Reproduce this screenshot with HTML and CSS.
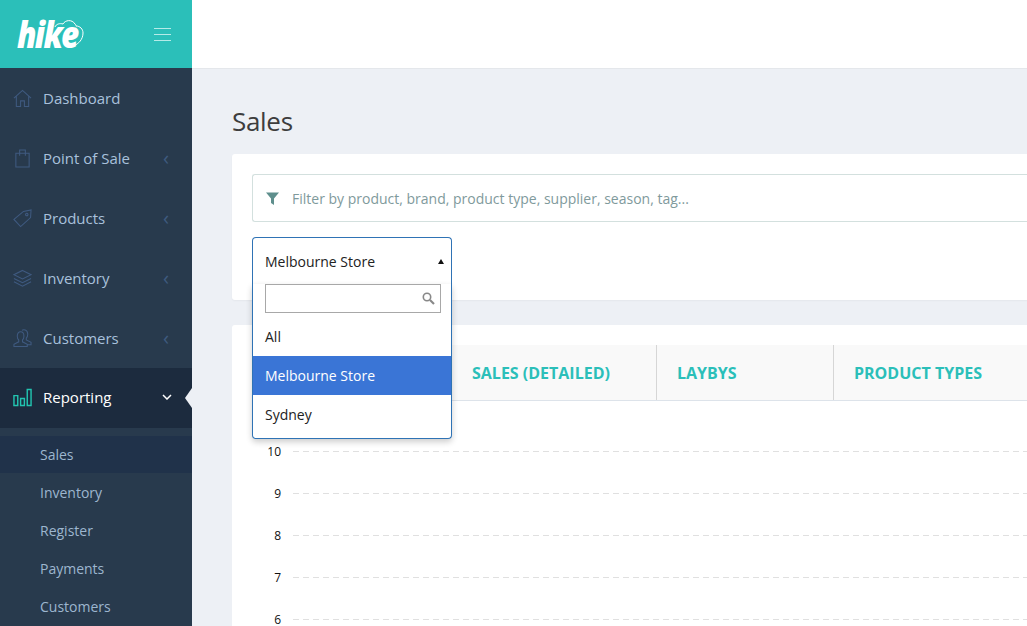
FILE: index.html
```html
<!DOCTYPE html>
<html lang="en">
<head>
    <meta charset="UTF-8">
    <meta name="viewport" content="width=device-width, initial-scale=1.0">
    <title>Sales - Hike</title>
    <link rel="stylesheet" href="styles.css">
</head>
<body>
    <div class="app">
        <aside class="sidebar">
            <div class="brand">
                <div class="logo">
                    <svg class="logo-cloud" width="34" height="32" viewBox="0 0 34 32" fill="none" stroke="#fff" stroke-width="1">
                        <path d="M3 9c1-3 5-4 8-3 2-4 9-5 12 0 1 1 1 2 1 2 4 0 7 3 7 7 0 6-4 11-10 13"/>
                    </svg>
                    <span class="logo-text">hike</span>
                </div>
                <div class="burger"><span></span><span></span><span></span></div>
            </div>
            <nav class="nav">
                <a class="nav-item">
                    <svg class="nav-icon" viewBox="0 0 20 20" fill="none" stroke="#3f5a80" stroke-width="1.1">
                        <path d="M1 9.500 10 1.500l9 8M3.500 8v10.500h4.500v-6h4v6h4.500V8"/>
                    </svg>
                    <span class="nav-label">Dashboard</span>
                </a>
                <a class="nav-item">
                    <svg class="nav-icon" viewBox="0 0 20 20" fill="none" stroke="#3f5a80" stroke-width="1.1">
                        <path d="M3 4.500h14v14.500H3zM7 7V1h6v6"/>
                    </svg>
                    <span class="nav-label">Point of Sale</span>
                    <span class="nav-arrow">&lsaquo;</span>
                </a>
                <a class="nav-item">
                    <svg class="nav-icon" viewBox="0 0 20 20" fill="none" stroke="#3f5a80" stroke-width="1.1">
                        <path d="M1 11 11 2.500l8-1.500-.5 8L8 18.500zM14.500 4.500a1.300 1.300 0 1 0 .01 0z"/>
                    </svg>
                    <span class="nav-label">Products</span>
                    <span class="nav-arrow">&lsaquo;</span>
                </a>
                <a class="nav-item">
                    <svg class="nav-icon" viewBox="0 0 20 20" fill="none" stroke="#3f5a80" stroke-width="1.1">
                        <path d="M10 1.500 19 6l-9 4.500L1 6zM1 10l9 4.500 9-4.500M1 13.500 10 18l9-4.500"/>
                    </svg>
                    <span class="nav-label">Inventory</span>
                    <span class="nav-arrow">&lsaquo;</span>
                </a>
                <a class="nav-item">
                    <svg class="nav-icon" viewBox="0 0 20 20" fill="none" stroke="#3f5a80" stroke-width="1.1">
                        <path d="M1 18.500v-2.500l5-2.500v-2c-1-1-1.500-2.500-1.500-4 0-3 1.500-4.500 3.500-4.500s3.500 1.500 3.500 4.500c0 1.500-.5 3-1.500 4v2l5 2.500v2.500zM9.500 1.500c1-1 6-1.500 6 4 0 1.500-.5 3-1.500 4v2l5 2.500v2.500h-3.500"/>
                    </svg>
                    <span class="nav-label">Customers</span>
                    <span class="nav-arrow">&lsaquo;</span>
                </a>
                <a class="nav-item active">
                    <svg class="nav-icon" viewBox="0 0 20 20" fill="none" stroke="#22c4b0" stroke-width="1.500">
                        <path d="M1 8h4v10.500H1zM8 11h4v7.500H8zM15 1.500h4v17h-4z"/>
                    </svg>
                    <span class="nav-label">Reporting</span>
                    <svg class="nav-chevron" width="10" height="6" viewBox="0 0 10 6" fill="none" stroke="#fff" stroke-width="1.500">
                        <path d="M1 1l4 4 4-4"/>
                    </svg>
                </a>
            </nav>
            <div class="subnav">
                <a class="sub-item current">Sales</a>
                <a class="sub-item">Inventory</a>
                <a class="sub-item">Register</a>
                <a class="sub-item">Payments</a>
                <a class="sub-item">Customers</a>
            </div>
        </aside>

        <div class="main">
            <header class="topbar"></header>
            <div class="content">
                <h1 class="page-title">Sales</h1>

                <section class="card filters">
                    <div class="filter-input">
                        <svg width="13" height="13" viewBox="0 0 13 13" fill="#5f8f8d">
                            <path d="M0 .5h13L8 6.500V13L5 11V6.500z"/>
                        </svg>
                        <span class="filter-hint">Filter by product, brand, product type, supplier, season, tag...</span>
                    </div>
                    <div class="select-wrap">
                        <div class="select-head">
                            <span>Melbourne Store</span>
                            <span class="select-caret"></span>
                        </div>
                        <div class="select-drop">
                            <div class="select-search">
                                <svg width="13" height="13" viewBox="0 0 13 13" fill="none" stroke="#888" stroke-width="1.600">
                                    <circle cx="5" cy="5" r="3.700"/>
                                    <path d="M8 8l4 4" stroke-width="2.200"/>
                                </svg>
                            </div>
                            <ul class="select-list">
                                <li>All</li>
                                <li class="highlighted">Melbourne Store</li>
                                <li>Sydney</li>
                            </ul>
                        </div>
                    </div>
                </section>

                <section class="card report">
                    <div class="tabs">
                        <div class="tab tab-first"></div>
                        <div class="tab tab-detailed">SALES (DETAILED)</div>
                        <div class="tab tab-laybys">LAYBYS</div>
                        <div class="tab">PRODUCT TYPES</div>
                    </div>
                    <div class="chart">
                        <div class="chart-row"><span>10</span><i></i></div>
                        <div class="chart-row"><span>9</span><i></i></div>
                        <div class="chart-row"><span>8</span><i></i></div>
                        <div class="chart-row"><span>7</span><i></i></div>
                        <div class="chart-row"><span>6</span><i></i></div>
                    </div>
                </section>
            </div>
        </div>
    </div>
</body>
</html>
```

FILE: styles.css
```css
* {
    box-sizing: border-box;
}
html, body {
    margin: 0;
    height: 100%;
    overflow: hidden;
}
body {
    font-family: "Open Sans", Arial, sans-serif;
    font-size: 14px;
    color: #333;
    background-color: #edf0f5;
}
.app {
    display: flex;
    height: 626px;
    overflow: hidden;
}

/* sidebar */
.sidebar {
    flex: 0 0 192px;
    background-color: #283a4d;
}
.brand {
    display: flex;
    align-items: center;
    justify-content: space-between;
    height: 68px;
    padding: 0 21px 0 17px;
    background-color: #2bbfb9;
}
.logo {
    position: relative;
    width: 68px;
    height: 40px;
}
.logo-text {
    position: relative;
    display: block;
    font-size: 37px;
    line-height: 40px;
    font-weight: 800;
    font-style: italic;
    letter-spacing: -2px;
    color: #fff;
    transform: scaleX(0.85);
    transform-origin: left center;
}
.logo-cloud {
    position: absolute;
    left: 35px;
    top: 4px;
}
.burger {
    display: flex;
    flex-direction: column;
    gap: 5px;
    width: 17px;
}
.burger span {
    height: 1px;
    background-color: #b5ebe8;
}
.nav-item {
    display: flex;
    align-items: center;
    height: 60px;
    padding-left: 13px;
    color: #a9c1dc;
    font-size: 15px;
}
.nav-icon {
    flex: 0 0 19px;
    width: 19px;
    height: 19px;
    margin-right: 11px;
}
.nav-label {
    flex: 1;
}
.nav-arrow {
    margin-right: 23px;
    font-size: 20px;
    line-height: 18px;
    color: #3f5a80;
}
.nav-item.active {
    position: relative;
    padding-bottom: 2px;
    background-color: #1c2b3e;
    color: #fff;
}
.nav-chevron {
    margin-right: 20px;
}
.nav-item.active::after {
    content: "";
    position: absolute;
    right: 0;
    top: 20px;
    border-top: 10px solid transparent;
    border-bottom: 10px solid transparent;
    border-right: 7px solid #edf0f5;
}
.subnav {
    padding-top: 8px;
}
.sub-item {
    display: flex;
    align-items: center;
    height: 38px;
    padding-left: 40px;
    font-size: 14px;
    color: #9db6cf;
}
.sub-item.current {
    background-color: #20324a;
    height: 37px;
}

/* main */
.main {
    flex: 1;
    min-width: 0;
}
.topbar {
    height: 69px;
    background-color: #fff;
    border-bottom: 1px solid #e4e7eb;
}
.content {
    width: 900px;
    margin-left: 40px;
}
.page-title {
    margin: 0;
    padding-top: 33px;
    height: 85px;
    font-size: 26px;
    line-height: 38px;
    font-weight: 500;
    letter-spacing: -0.3px;
    color: #3d3d3d;
}
.card {
    background-color: #fff;
    border-radius: 3px 0 0 3px;
    padding: 20px;
}
.filters {
    height: 146px;
    box-shadow: 0 1px 2px rgba(0, 0, 0, 0.04);
}
.filter-input {
    display: flex;
    align-items: center;
    gap: 13px;
    height: 48px;
    padding-left: 13px;
    border: 1px solid #d3e0de;
    border-right: 0;
    border-radius: 3px 0 0 3px;
}
.filter-hint {
    color: #7f9a9c;
    font-size: 14px;
}
.select-wrap {
    position: relative;
    z-index: 2;
    width: 200px;
    margin-top: 15px;
}
.select-head {
    display: flex;
    align-items: center;
    justify-content: space-between;
    height: 47px;
    padding: 1px 7px 0 12px;
    border: 1px solid #2f73b5;
    border-bottom: 0;
    border-radius: 4px 4px 0 0;
    background-color: #fff;
    color: #222;
}
.select-caret {
    border-left: 3.5px solid transparent;
    border-right: 3.5px solid transparent;
    border-bottom: 5px solid #111;
}
.select-drop {
    position: absolute;
    left: 0;
    right: 0;
    top: 47px;
    border: 1px solid #2f73b5;
    border-top: 0;
    border-radius: 0 0 4px 4px;
    background-color: #fff;
    box-shadow: 0 3px 6px rgba(0, 0, 0, 0.2);
}
.select-search {
    display: flex;
    align-items: center;
    justify-content: flex-end;
    height: 29px;
    margin: 0 10px 4px 12px;
    padding-right: 5px;
    border: 1px solid #a8a8a8;
}
.select-list {
    list-style: none;
    margin: 0;
    padding: 0 0 4px;
    color: #222;
}
.select-list li {
    display: flex;
    align-items: center;
    height: 39px;
    padding-left: 12px;
}
.select-list .highlighted {
    background-color: #3a75d6;
    color: #fff;
}
.report {
    margin-top: 25px;
    height: 400px;
}
.tabs {
    display: flex;
    height: 56px;
    background-color: #f9f9f9;
    border-bottom: 1px solid #dde3ea;
}
.tab {
    display: flex;
    align-items: center;
    height: 55px;
    padding-left: 20px;
    font-size: 16px;
    font-weight: 700;
    color: #2bbfb9;
}
.tab-first {
    width: 200px;
}
.tab-detailed {
    width: 205px;
    border-right: 1px solid #d6d6d6;
}
.tab-laybys {
    width: 177px;
    border-right: 1px solid #d6d6d6;
}
.chart {
    padding-top: 29px;
}
.chart-row {
    display: flex;
    align-items: center;
    height: 42px;
}
.chart-row span {
    width: 29px;
    text-align: right;
    font-size: 12px;
    color: #111;
}
.chart-row i {
    flex: 1;
    height: 1px;
    margin-left: 12px;
    background: repeating-linear-gradient(to right, #e0e0e0 0 6px, transparent 6px 10px);
}
```
